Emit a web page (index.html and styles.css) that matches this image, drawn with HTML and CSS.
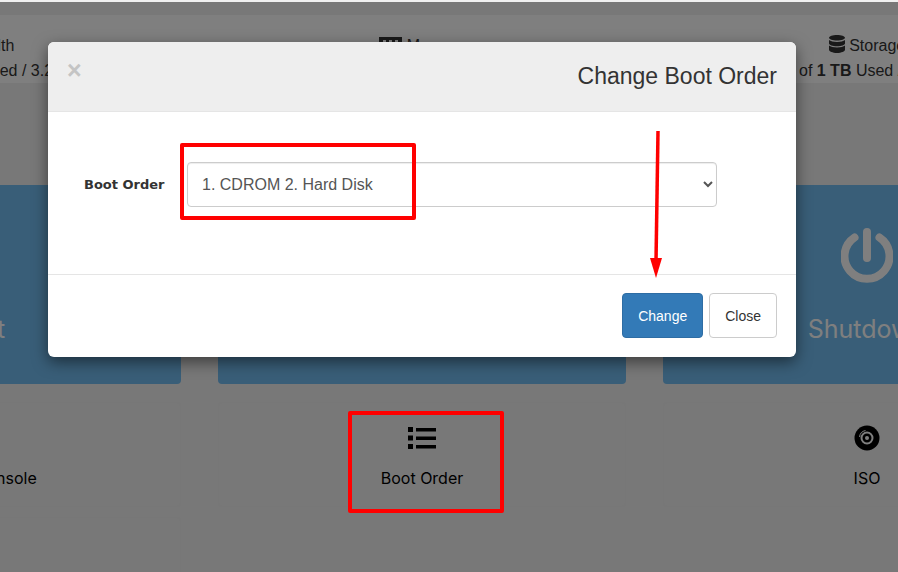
FILE: index.html
```html
<!DOCTYPE html>
<html lang="en">
<head>
  <meta charset="utf-8">
  <title>Change Boot Order</title>
  <link rel="stylesheet" href="styles.css">
</head>
<body>
  <div class="dash">
    <div class="stats">
      <div class="stat">
        <div><span class="stat-icon"></span>Bandwidth</div>
        <div>312.5 GB of 3.5 TB Used / 3.2 TB Free</div>
      </div>
      <div class="stat">
        <div>
          <svg class="ram" width="23" height="16" viewBox="0 0 23 16"><path d="M0 0h23v11H0zM4 3v5h3V3zM10 3v5h3V3zM16 3v5h3V3z" fill-rule="evenodd" fill="#333"/></svg>
          Memory
        </div>
        <div>1 GB of 4 GB Used</div>
      </div>
      <div class="stat">
        <div>
          <svg class="db" width="16" height="18" viewBox="0 0 16 18"><path d="M8 0c4.400 0 8 1.200 8 2.800S12.400 5.600 8 5.600 0 4.400 0 2.800 3.600 0 8 0zM0 5c1.500 1.300 4.500 2 8 2s6.500-.7 8-2v3.400c0 1.600-3.600 2.800-8 2.800S0 10 0 8.400zM0 10.400c1.500 1.300 4.500 2 8 2s6.500-.7 8-2v4.400c0 1.600-3.600 3.200-8 3.200s-8-1.600-8-3.200z" fill="#333"/></svg>
          Storage
        </div>
        <div>12.5 GB of <b>1 TB</b> Used / 988 GB Free</div>
      </div>
    </div>

    <div class="tiles">
      <div class="tile">
        <svg class="tile-icon" width="52" height="56" viewBox="0 0 52 56"><path d="M8 4l40 24L8 52z" fill="#fff"/></svg>
        <span>Start</span>
      </div>
      <div class="tile">
        <svg class="tile-icon" width="52" height="56" viewBox="0 0 52 56"><circle cx="26" cy="28" r="22" fill="#fff"/></svg>
        <span>Restart</span>
      </div>
      <div class="tile">
        <svg class="tile-icon" width="52" height="56" viewBox="0 0 52 56">
          <path d="M13.500 9.500a22.500 22.500 0 1 0 25 0" fill="none" stroke="#fff" stroke-width="8" stroke-linecap="round"/>
          <path d="M26 4v26" fill="none" stroke="#fff" stroke-width="8" stroke-linecap="round"/>
        </svg>
        <span>Shutdown</span>
      </div>
    </div>

    <div class="cards">
      <div class="card">
        <span class="card-icon"></span>
        <span>noVNC Console</span>
      </div>
      <div class="card">
        <svg class="card-icon" width="28" height="22" viewBox="0 0 28 22">
          <path d="M0 0h5v5H0zM0 8.500h5v5H0zM0 17h5v5H0zM8 1h20v3.500H8zM8 9.500h20V13H8zM8 18h20v3.500H8z" fill="#000"/>
        </svg>
        <span>Boot Order</span>
      </div>
      <div class="card">
        <svg class="card-icon" width="26" height="26" viewBox="0 0 26 26">
          <circle cx="13" cy="13" r="12.500" fill="#000"/>
          <circle cx="13" cy="13" r="5.500" fill="none" stroke="#fff" stroke-width="2"/>
          <circle cx="13" cy="13" r="2" fill="#fff"/>
          <path d="M5.500 12a7.500 7.500 0 0 1 6-6.500" fill="none" stroke="#fff" stroke-width="1"/>
        </svg>
        <span>ISO</span>
      </div>
      <div class="card"></div>
    </div>
  </div>

  <div class="backdrop"></div>

  <div class="modal">
    <div class="modal-header">
      <span class="modal-close">&times;</span>
      <h4>Change Boot Order</h4>
    </div>
    <div class="modal-body">
      <label for="bootOrder">Boot Order</label>
      <select id="bootOrder">
        <option>1. CDROM 2. Hard Disk</option>
        <option>1. Hard Disk 2. CDROM</option>
      </select>
    </div>
    <div class="modal-footer">
      <button class="btn btn-primary">Change</button>
      <button class="btn">Close</button>
    </div>
  </div>

  <div class="mark mark-select"></div>
  <div class="mark mark-boot"></div>
  <svg class="arrow" width="24" height="152" viewBox="0 0 24 152">
    <path d="M14 1L12 132" stroke="#f00" stroke-width="3.500" fill="none"/>
    <path d="M6 128h12l-6 20z" fill="#f00"/>
  </svg>
</body>
</html>
```

FILE: styles.css
```css
html, body {
  margin: 0;
  height: 572px;
  overflow: hidden;
}
body {
  position: relative;
  background-color: #f0f0f0;
  font-family: "Liberation Sans", Arial, sans-serif;
  color: #333;
}
.dash {
  width: 1298px;
  margin-left: -227px;
  padding-top: 15px;
}
.stats {
  display: grid;
  grid-template-columns: repeat(3, 408px);
  gap: 37px;
  height: 68px;
  background-color: #fff;
  font-size: 16px;
  line-height: 25px;
  text-align: center;
  padding-top: 18px;
  box-sizing: border-box;
}
.stat {
  white-space: nowrap;
}
.stat b {
  font-weight: 700;
}
.stat svg {
  vertical-align: -2px;
}
.tiles {
  display: grid;
  grid-template-columns: repeat(3, 408px);
  gap: 37px;
  margin-top: 102px;
}
.tile {
  height: 199px;
  background-color: #72bcf0;
  border-radius: 0 0 4px 4px;
  display: flex;
  flex-direction: column;
  align-items: center;
  padding-top: 43px;
  box-sizing: border-box;
  color: #fff;
  font-family: Inter, sans-serif;
  font-size: 25px;
}
.tile-icon {
  margin-bottom: 30px;
}
.cards {
  display: grid;
  grid-template-columns: repeat(3, 408px);
  gap: 10px 37px;
  margin-top: 18px;
}
.card {
  height: 105px;
  border: 1px solid #eee;
  border-radius: 4px;
  box-sizing: border-box;
  display: flex;
  flex-direction: column;
  align-items: center;
  padding-top: 22px;
  color: #000;
  font-family: Inter, sans-serif;
  font-size: 16px;
}
.card-icon {
  height: 26px;
  margin-bottom: 17px;
}
.backdrop {
  position: absolute;
  inset: 2px 0 0 0;
  background-color: rgba(0, 0, 0, 0.5);
}
.modal {
  position: absolute;
  left: 48px;
  top: 42px;
  width: 748px;
  background-color: #fff;
  border-radius: 6px;
  box-shadow: 0 5px 15px rgba(0, 0, 0, 0.5);
}
.modal-header {
  display: flex;
  justify-content: space-between;
  height: 70px;
  padding: 19px 19px 0;
  box-sizing: border-box;
  background-color: #eee;
  border-bottom: 1px solid #e5e5e5;
  border-radius: 6px 6px 0 0;
}
.modal-header h4 {
  margin: 0;
  font-size: 23px;
  font-weight: 400;
  line-height: 30px;
}
.modal-close {
  font-size: 25px;
  font-weight: 700;
  line-height: 18px;
  color: #c4c4c4;
}
.modal-body {
  display: flex;
  align-items: center;
  height: 163px;
  padding: 0 0 18px 36px;
  box-sizing: border-box;
  border-bottom: 1px solid #e5e5e5;
}
.modal-body label {
  width: 103px;
  font-family: "DejaVu Sans", sans-serif;
  font-size: 13px;
  font-weight: 700;
}
.modal-body select {
  width: 530px;
  height: 45px;
  padding: 0 10px;
  background-color: #fff;
  border: 1px solid #ccc;
  border-radius: 4px;
  box-shadow: inset 0 1px 1px rgba(0, 0, 0, 0.075);
  color: #555;
  font-family: inherit;
  font-size: 16px;
}
.modal-footer {
  display: flex;
  justify-content: flex-end;
  gap: 6px;
  padding: 18px 19px 19px;
}
.btn {
  height: 45px;
  padding: 0 15px;
  background-color: #fff;
  border: 1px solid #ccc;
  border-radius: 4px;
  color: #333;
  font-family: inherit;
  font-size: 14px;
}
.btn-primary {
  background-color: #337ab7;
  border-color: #2e6da4;
  color: #fff;
}
.mark {
  position: absolute;
  border: 4px solid #f00;
  border-radius: 2px;
  box-sizing: border-box;
}
.mark-select {
  left: 180px;
  top: 143px;
  width: 236px;
  height: 77px;
}
.mark-boot {
  left: 348px;
  top: 411px;
  width: 156px;
  height: 102px;
}
.arrow {
  position: absolute;
  left: 644px;
  top: 130px;
}
```
